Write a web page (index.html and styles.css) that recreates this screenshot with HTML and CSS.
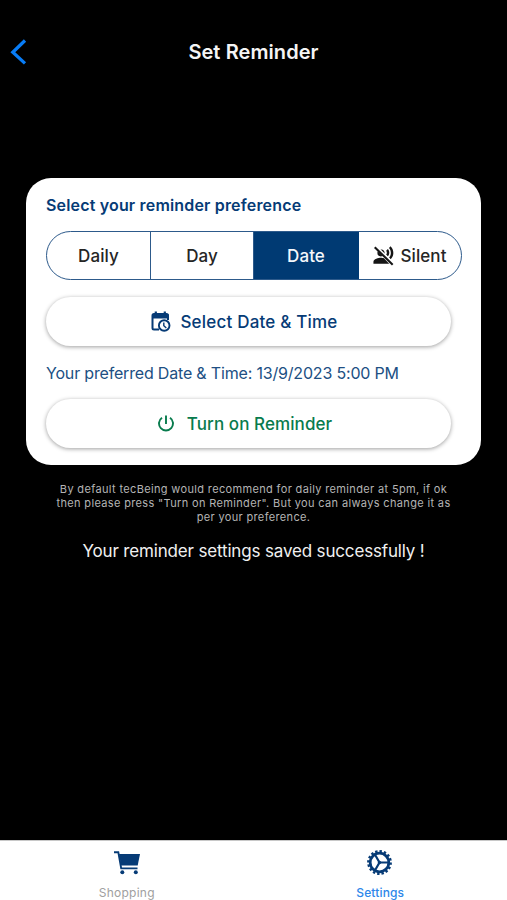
FILE: index.html
```html
<!DOCTYPE html>
<html lang="en">
<head>
<meta charset="utf-8">
<title>Set Reminder</title>
<link rel="stylesheet" href="styles.css">
</head>
<body>
<div class="screen">
  <header class="header">
    <svg class="back" width="18" height="28" viewBox="0 0 18 28"><path d="M16 2.500 3.800 14.200l12.200 11.200" fill="none" stroke="#087cf5" stroke-width="3.300"/></svg>
    <h1 class="title">Set Reminder</h1>
    <span></span>
  </header>
  <main class="content">
    <section class="card">
      <h2 class="heading">Select your reminder preference</h2>
      <div class="segments">
        <div class="segment">Daily</div>
        <div class="segment">Day</div>
        <div class="segment active">Date</div>
        <div class="segment silent">
          <svg width="21" height="21" viewBox="0 0 24 24" fill="#151515"><path d="M9 14.500c-2.670 0-8.500 1.340-8.500 4.500v2.500h18L12.500 15.200C11.600 14.700 9.970 14.500 9 14.500zM5 9a4 4 0 0 0 4 4l2-.500L5.500 7C5.200 7.600 5 8.300 5 9z"/><path d="M9.500 5c2.210 0 3.800 1.790 3.800 4l-.300 1.500L8 5.300zM15.080 6.500c1 1.300 1 3.300 0 4.500l1.900 1.900c2.200-2.200 2.200-5.800 0-8.200zM20.070 1.500l-1.830 1.830c2.770 3.020 2.970 7.860.2 11.040L20.270 16.200c4.100-4 3.910-10.650-.2-14.700z"/><path d="M4 1.500 24 21.500" stroke="#fff" stroke-width="1.700"/><path d="M2 2.500 22.500 22.500" stroke="#151515" stroke-width="2.400"/></svg>
          <span>Silent</span>
        </div>
      </div>
      <div class="button pick">
        <svg width="20" height="22" viewBox="0 0 20 22" fill="none" stroke="#063b76" stroke-width="2"><path d="M8 18.500H3Q1.500 18.500 1.500 17V4.500Q1.500 3 3 3h12.500Q17 3 17 4.500V9"/><path d="M1 3h16.500v4.500H1z" fill="#063b76" stroke="none"/><path d="M4.800.5v3M13.800.5v3" stroke-width="2.200"/><circle cx="13.200" cy="14.500" r="5.300" fill="#fff" stroke-width="1.900"/><path d="M12.800 11.400v3.400l2.500 2.200" stroke-width="1.400"/></svg>
        <span>Select Date &amp; Time</span>
      </div>
      <p class="preferred">Your preferred Date &amp; Time: 13/9/2023 5:00 PM</p>
      <div class="button turn">
        <svg width="16" height="17" viewBox="0 0 16 17" fill="none" stroke="#087b4d" stroke-width="1.900"><path d="M8 .500v8.500M4 2.700a7 7 0 1 0 8 0"/></svg>
        <span>Turn on Reminder</span>
      </div>
    </section>
    <p class="note">By default tecBeing would recommend for daily reminder at 5pm, if ok<br>then please press "Turn on Reminder". But you can always change it as<br>per your preference.</p>
    <p class="status">Your reminder settings saved successfully !</p>
  </main>
  <nav class="tabs">
    <div class="tab">
      <svg width="28" height="26" viewBox="0 0 28 26"><path d="M1 2.200h4.300l2.900 16.200h16.300" fill="none" stroke="#063b76" stroke-width="1.900"/><path d="M6 4h21l-2.300 11.500H8z" fill="#063b76"/><circle cx="9.300" cy="22.200" r="2" fill="#063b76"/><circle cx="22.800" cy="22.200" r="2" fill="#063b76"/></svg>
      <span>Shopping</span>
    </div>
    <div class="tab current">
      <svg width="28" height="26" viewBox="0 0 28 26" fill="none" stroke="#063b76"><circle cx="13.500" cy="12.500" r="9.300" stroke-width="2.700"/><circle cx="13.500" cy="12.500" r="11.200" stroke-width="2.400" pathLength="32" stroke-dasharray="1.100 .9"/><path d="M13.500 12.500h9M13.500 12.500 8.900 4.500M13.500 12.500 8.900 20.500" stroke-width="2.200"/><circle cx="13.500" cy="12.500" r="1.700" fill="#063b76" stroke="none"/></svg>
      <span>Settings</span>
    </div>
  </nav>
</div>
</body>
</html>
```
FILE: styles.css
```css
* { box-sizing: border-box; }
body { margin: 0; background: #000; font-family: Inter, "Liberation Sans", sans-serif; }
.screen { width: 507px; height: 900px; display: flex; flex-direction: column; background: #000; white-space: nowrap; }
.header { height: 178px; padding: 38px 9px 0; display: grid; grid-template-columns: 60px 1fr 60px; align-items: start; }
.back { display: block; }
.title { margin: 0; font-size: 20px; line-height: 28px; font-weight: 600; letter-spacing: .08px; color: #f5f5f5; text-align: center; }
.content { flex: 1; padding: 0 26px; }
.card { height: 287px; background: #fff; border-radius: 25px; padding: 15px 19px 0 20px; }
.heading { margin: 0; font-size: 16px; line-height: 24px; font-weight: 600; letter-spacing: .17px; color: #063b76; }
.segments { margin-top: 14px; height: 49px; border: 1px solid #2d5a8b; border-radius: 25px; overflow: hidden; display: grid; grid-template-columns: 104px 103px 105px 1fr; }
.segment { display: flex; align-items: center; justify-content: center; font-size: 17px; font-weight: 500; letter-spacing: .1px; color: #252525; border-right: 1px solid #2d5a8b; }
.segment:last-child { border-right: 0; }
.segment.active { background: #003a73; border-color: #003a73; color: #f4f7fb; }
.silent { gap: 6px; }
.button { width: 405px; height: 49px; border-radius: 25px; display: flex; align-items: center; justify-content: center; font-size: 17px; font-weight: 500; box-shadow: 0 1px 4px rgba(0,0,0,.38); background: #fff; }
.pick { margin-top: 17px; padding-right: 8px; gap: 9px; letter-spacing: .2px; color: #063b76; }
.preferred { margin: 15px 0 14px; font-size: 16px; line-height: 24px; letter-spacing: -.18px; color: #204f83; }
.turn { padding-right: 7px; gap: 13px; letter-spacing: .08px; color: #087b4d; }
.note { margin: 18px 0 0; text-align: center; font-size: 11px; line-height: 13.800px; letter-spacing: .35px; color: #b4b4b4; }
.status { margin: 15px 0 0; text-align: center; font-size: 17px; line-height: 24px; letter-spacing: -.16px; color: #f0f0f0; }
.tabs { height: 60px; background: #fff; border-top: 1px solid #c8c8c8; display: grid; grid-template-columns: 1fr 1fr; }
.tab { display: flex; flex-direction: column; align-items: center; padding-top: 9px; gap: 9px; font-size: 12px; line-height: 16px; font-weight: 400; letter-spacing: .25px; color: #a0a0a0; }
.current { font-weight: 500; letter-spacing: .15px; color: #2d87ea; }
```
